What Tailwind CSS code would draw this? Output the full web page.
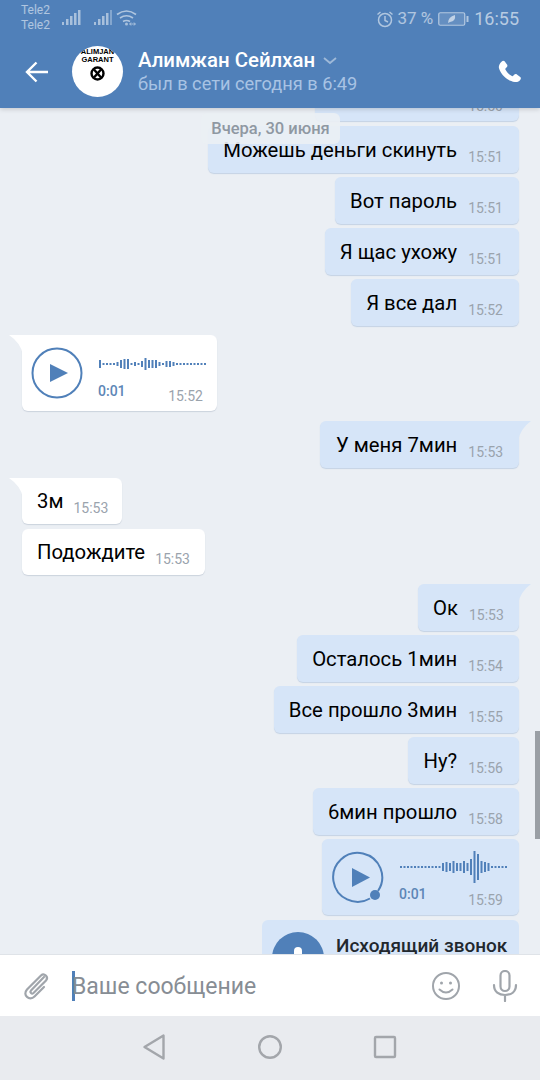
<!doctype html>
<html><head><meta charset="utf-8"><script src="https://cdn.jsdelivr.net/npm/@tailwindcss/browser@4"></script></head>
<body class="m-0 bg-[#ebeff4]">
<div class="w-[540px] h-[1080px] flex flex-col overflow-hidden relative font-['Roboto',sans-serif]">
  <header class="h-[108px] shrink-0 bg-[#5080b9] relative z-10 shadow-[0_1px_5px_rgba(0,0,0,0.18)]">
    <div class="h-[36px] flex items-start pl-[21px] pr-[21px] text-white/50">
      <div class="w-[35px] pt-[3px] text-[12px] leading-[15px] text-white/55 font-['Roboto']"><div>Tele2</div><div>Tele2</div></div>
      <svg class="mt-[9px] ml-[5px]" width="82" height="20" viewBox="0 0 82 20" fill="#fff" fill-opacity=".5">
        <rect x="1" y="13" width="2" height="3"/><rect x="5" y="10" width="2.5" height="6"/><rect x="9" y="7" width="2.5" height="9"/><rect x="13" y="4" width="2.5" height="12"/><rect x="17" y="1" width="2.5" height="15"/>
        <rect x="33" y="13" width="2" height="3"/><rect x="37" y="10" width="2.5" height="6"/><rect x="41" y="7" width="2.5" height="9"/><rect x="45" y="4" width="2.5" height="12"/><rect x="49" y="1" width="2" height="15" fill-opacity=".3"/>
        <g fill="none" stroke="#fff" stroke-opacity=".55" stroke-width="1.7"><path d="M56 5.5q9.500-7 19 0"/><path d="M59 9q6.500-4.500 13 0"/><path d="M62 12.500q3.500-2 7 0"/></g>
        <circle cx="65.500" cy="15" r="1.500"/><path d="M69 15h5M70 13.500l-1.500 1.500 1.500 1.500M73 13.500l1.500 1.500-1.500 1.500" stroke="#fff" stroke-opacity=".5" fill="none"/>
      </svg>
      <div class="ml-auto flex items-center h-[36px] pt-[1px]">
        <svg width="18" height="18" viewBox="0 0 18 18" fill="none" stroke="#fff" stroke-opacity=".55" stroke-width="1.500"><circle cx="9" cy="10" r="6.500"/><path d="M9 6v4.500l3 1.500M1.500 4.500 4.500 2M16.500 4.500 13.500 2"/></svg>
        <span class="ml-[3px] text-[17px] text-white/55">37 %</span>
        <svg class="ml-[5px]" width="31" height="16" viewBox="0 0 31 16"><rect x=".75" y="1.750" width="26" height="12.500" rx="1.500" fill="#fff" fill-opacity=".12" stroke="#fff" stroke-opacity=".55" stroke-width="1.200"/><path d="M10 12q0-6 7-8 1 6-5 7z" fill="#fff" fill-opacity=".6"/><rect x="28.500" y="5" width="2" height="6" fill="#fff" fill-opacity=".55"/></svg>
        <span class="ml-[5px] text-[18px] text-white/60">16:55</span>
      </div>
    </div>
    <div class="h-[71px] flex items-center">
      <svg class="ml-[25px]" width="24" height="22" viewBox="0 0 24 22" fill="none" stroke="#fff" stroke-width="2.400"><path d="M23 11H2M11.500 1.500 2 11l9.500 9.500"/></svg>
      <div class="ml-[23px] w-[51px] h-[51px] rounded-full bg-white flex flex-col items-center overflow-hidden text-black font-black text-[7.500px] leading-[8px] font-['Liberation_Sans']">
        <div class="mt-[2px] whitespace-nowrap">ALIMJAN</div><div class="whitespace-nowrap">GARANT</div>
        <svg class="mt-[2px]" width="15" height="15" viewBox="0 0 15 15" fill="none" stroke="#000" stroke-width="2.400"><circle cx="7.500" cy="7.500" r="6"/><path d="m4 3.500 7 8M11 3.500l-7 8"/></svg>
      </div>
      <div class="ml-[15px] w-[250px]">
        <div class="flex items-center text-white text-[20.400px] leading-[25px] font-medium whitespace-nowrap">Алимжан Сейлхан<svg class="ml-[8px]" width="14" height="8" viewBox="0 0 14 8" fill="none" stroke="#fff" stroke-opacity=".45" stroke-width="1.800"><path d="m1 1 6 5 6-5"/></svg></div>
        <div class="text-[#a8c3e4] text-[18.200px] leading-[22px] whitespace-nowrap">был в сети сегодня в 6:49</div>
      </div>
      <svg class="ml-auto mr-[18px]" width="24" height="24" viewBox="0 0 24 24" fill="#fff"><path d="M6.600 1.300 9 4.600c.6.800.5 1.800-.1 2.500L7.500 8.500c-.3.300-.3.700-.1 1.100 1.500 2.800 3.700 5 6.500 6.500.4.200.8.200 1.100-.1l1.400-1.400c.7-.7 1.700-.7 2.500-.1l3.300 2.400c.8.600.9 1.700.3 2.500-1.400 2-3.500 3.100-5.700 2.600C9 20.800 2.700 14 1 8.200.4 6 1.500 3.600 3.800 1.400c.8-.8 2.100-.8 2.800-.1z"/></svg>
    </div>
  </header>

  <main class="flex-1 min-h-0 overflow-hidden relative flex flex-col items-end pr-[21px] text-black text-[20.300px]">
    <div class="shrink-0 -mt-[32px] mb-[5px] relative w-[204px] h-[45px] rounded-[6px] bg-[#d6e5f8] shadow-[0_1px_1px_rgba(80,128,185,0.25)] flex items-end justify-end pr-[16px] pb-[7px] text-[14px] leading-[16px] text-[#9aa3ad]">15:50
      <svg class="absolute left-[26px] -top-[12px]" width="20" height="20" viewBox="0 0 20 20" fill="none" stroke="#5080b9" stroke-width="2"><circle cx="10" cy="10" r="9"/></svg>
    </div>
    <div class="shrink-0 mb-[4px] h-[47px] rounded-[6px] bg-[#d6e5f8] shadow-[0_1px_1px_rgba(80,128,185,0.25)] pl-[15px] pr-[16px] flex whitespace-nowrap"><span class="mt-[9px] leading-[30px]">Можешь деньги скинуть</span><span class="ml-[11px] mt-[21px] text-[14px] leading-[20px] text-[#9aa3ad]">15:51</span></div>
    <div class="shrink-0 mb-[4px] h-[47px] rounded-[6px] bg-[#d6e5f8] shadow-[0_1px_1px_rgba(80,128,185,0.25)] pl-[15px] pr-[16px] flex whitespace-nowrap"><span class="mt-[9px] leading-[30px]">Вот пароль</span><span class="ml-[11px] mt-[21px] text-[14px] leading-[20px] text-[#9aa3ad]">15:51</span></div>
    <div class="shrink-0 mb-[4px] h-[47px] rounded-[6px] bg-[#d6e5f8] shadow-[0_1px_1px_rgba(80,128,185,0.25)] pl-[15px] pr-[16px] flex whitespace-nowrap"><span class="mt-[9px] leading-[30px]">Я щас ухожу</span><span class="ml-[11px] mt-[21px] text-[14px] leading-[20px] text-[#9aa3ad]">15:51</span></div>
    <div class="shrink-0 mb-[9px] h-[47px] rounded-[6px] bg-[#d6e5f8] shadow-[0_1px_1px_rgba(80,128,185,0.25)] pl-[15px] pr-[16px] flex whitespace-nowrap"><span class="mt-[9px] leading-[30px]">Я все дал</span><span class="ml-[11px] mt-[21px] text-[14px] leading-[20px] text-[#9aa3ad]">15:52</span></div>

    <div class="self-start shrink-0 ml-[22px] mb-[10px] relative w-[195px] h-[76px] rounded-[6px] rounded-tl-none bg-white shadow-[0_1px_1px_rgba(80,100,130,0.2)]">
      <svg class="absolute -left-[13px] top-0" width="14" height="20" viewBox="0 0 14 20" fill="#fff"><path d="M0 0h14v20Q12 8 0 0z"/></svg>
      <svg class="absolute left-[9px] top-[12px]" width="52" height="52" viewBox="0 0 52 52"><circle cx="26" cy="26" r="24.500" fill="none" stroke="#5080b9" stroke-width="2"/><path d="M19 17v18l18-9z" fill="#5080b9"/></svg>
      <svg class="absolute left-[77px] top-[18px]" width="110" height="22" viewBox="0 0 110 22" stroke="#5080b9" stroke-width="2" fill="none"><path d="M1 7v8M4.500 10v2M8 10v2M11.500 10v2M15 10v2M18.500 9v4M22 7v8M25.500 6v10M29 6v10M32.500 10v2M36 9v4M39.500 10v2M43 8v6M46.500 5v12M50 7v8M53.500 7v8M57 7v8M60.500 9v4M64 10v2M67.500 8v6M71 8v6M74.500 9v4M78 10v2M81.500 10v2M85 10v2M88.500 10v2M92 10v2M95.500 10v2M99 10v2M102.500 10v2M106 10v2"/></svg>
      <span class="absolute left-[76px] top-[46px] text-[14px] leading-[20px] font-medium text-[#5d86b6]">0:01</span>
      <span class="absolute right-[14px] top-[51px] text-[14px] leading-[20px] text-[#9aa3ad]">15:52</span>
    </div>

    <div class="shrink-0 mb-[10px] relative h-[47px] w-[199px] rounded-[6px] rounded-tr-none bg-[#d6e5f8] shadow-[0_1px_1px_rgba(80,128,185,0.25)] pl-[16px] flex whitespace-nowrap">
      <span class="mt-[9px] leading-[30px]">У меня 7мин</span><span class="ml-[11px] mt-[21px] text-[14px] leading-[20px] text-[#9aa3ad]">15:53</span>
      <svg class="absolute -right-[12px] top-0" width="13" height="20" viewBox="0 0 13 20" fill="#d6e5f8"><path d="M0 0h13Q2 8 0 20z"/></svg>
    </div>

    <div class="self-start shrink-0 ml-[22px] mb-[5px] relative h-[46px] rounded-[6px] rounded-tl-none bg-white shadow-[0_1px_1px_rgba(80,100,130,0.2)] pl-[15px] pr-[14px] flex whitespace-nowrap">
      <svg class="absolute -left-[13px] top-0" width="14" height="20" viewBox="0 0 14 20" fill="#fff"><path d="M0 0h14v20Q12 8 0 0z"/></svg>
      <span class="mt-[8px] leading-[30px]">3м</span><span class="ml-[10px] mt-[20px] text-[14px] leading-[20px] text-[#9aa3ad]">15:53</span>
    </div>
    <div class="self-start shrink-0 ml-[22px] mb-[9px] h-[46px] rounded-[6px] bg-white shadow-[0_1px_1px_rgba(80,100,130,0.2)] pl-[15px] pr-[15px] flex whitespace-nowrap"><span class="mt-[8px] leading-[30px]">Подождите</span><span class="ml-[10px] mt-[20px] text-[14px] leading-[20px] text-[#9aa3ad]">15:53</span></div>

    <div class="shrink-0 mb-[4px] relative h-[47px] w-[101px] rounded-[6px] rounded-tr-none bg-[#d6e5f8] shadow-[0_1px_1px_rgba(80,128,185,0.25)] pl-[15px] flex whitespace-nowrap">
      <span class="mt-[9px] leading-[30px]">Ок</span><span class="ml-[11px] mt-[21px] text-[14px] leading-[20px] text-[#9aa3ad]">15:53</span>
      <svg class="absolute -right-[12px] top-0" width="13" height="20" viewBox="0 0 13 20" fill="#d6e5f8"><path d="M0 0h13Q2 8 0 20z"/></svg>
    </div>
    <div class="shrink-0 mb-[4px] h-[47px] rounded-[6px] bg-[#d6e5f8] shadow-[0_1px_1px_rgba(80,128,185,0.25)] pl-[15px] pr-[16px] flex whitespace-nowrap"><span class="mt-[9px] leading-[30px]">Осталось 1мин</span><span class="ml-[11px] mt-[21px] text-[14px] leading-[20px] text-[#9aa3ad]">15:54</span></div>
    <div class="shrink-0 mb-[4px] h-[47px] rounded-[6px] bg-[#d6e5f8] shadow-[0_1px_1px_rgba(80,128,185,0.25)] pl-[15px] pr-[16px] flex whitespace-nowrap"><span class="mt-[9px] leading-[30px]">Все прошло 3мин</span><span class="ml-[11px] mt-[21px] text-[14px] leading-[20px] text-[#9aa3ad]">15:55</span></div>
    <div class="shrink-0 mb-[4px] h-[47px] rounded-[6px] bg-[#d6e5f8] shadow-[0_1px_1px_rgba(80,128,185,0.25)] pl-[15px] pr-[16px] flex whitespace-nowrap"><span class="mt-[9px] leading-[30px]">Ну?</span><span class="ml-[11px] mt-[21px] text-[14px] leading-[20px] text-[#9aa3ad]">15:56</span></div>
    <div class="shrink-0 mb-[4px] h-[47px] rounded-[6px] bg-[#d6e5f8] shadow-[0_1px_1px_rgba(80,128,185,0.25)] pl-[15px] pr-[16px] flex whitespace-nowrap"><span class="mt-[9px] leading-[30px]">6мин прошло</span><span class="ml-[11px] mt-[21px] text-[14px] leading-[20px] text-[#9aa3ad]">15:58</span></div>

    <div class="shrink-0 mb-[5px] relative w-[197px] h-[76px] rounded-[6px] bg-[#d6e5f8] shadow-[0_1px_1px_rgba(80,128,185,0.25)]">
      <svg class="absolute left-[10px] top-[12px]" width="54" height="54" viewBox="0 0 54 54"><path d="M46 40A24.500 24.500 0 1 0 38 47.500" fill="none" stroke="#5080b9" stroke-width="2"/><path d="M20 17v19l18-9.500z" fill="#5080b9"/><circle cx="43" cy="44" r="5" fill="#5080b9"/></svg>
      <svg class="absolute left-[78px] top-[10px]" width="110" height="36" viewBox="0 0 110 36" stroke="#5080b9" stroke-width="2" fill="none"><path d="M1 17v2M4.500 17v2M8 17v2M11.500 17v2M15 17v2M18.500 17v2M22 17v2M25.500 17v2M29 17v2M32.500 17v2M36 17v2M39.500 17v2M43 14v8M46.500 13v10M50 14v8M53.500 12v12M57 14v8M60.500 14v8M64 12v12M67.500 14v8M71 10v16M74.500 2v32M78 5v26M81.500 12v12M85 13v10M88.500 14v8M92 17v2M95.500 17v2M99 17v2M102.500 17v2M106 17v2"/></svg>
      <span class="absolute left-[77px] top-[45px] text-[14px] leading-[20px] font-medium text-[#5d86b6]">0:01</span>
      <span class="absolute right-[16px] top-[51px] text-[14px] leading-[20px] text-[#9aa3ad]">15:59</span>
    </div>

    <div class="shrink-0 relative w-[257px] h-[80px] rounded-[6px] bg-[#d6e5f8]">
      <div class="absolute left-[10px] top-[12px] w-[52px] h-[52px] rounded-full bg-[#5080b9]"><div class="absolute left-[22px] top-[15px] w-[8px] h-[12px] rounded-full bg-white"></div></div>
      <span class="absolute left-[74px] top-[14px] text-[19px] leading-[24px] font-medium text-[#22282e] whitespace-nowrap">Исходящий звонок</span>
    </div>

    <div class="absolute left-[201px] top-[5px] w-[139px] h-[31px] rounded-[6px] bg-[#ebeff4]/90 text-[16.500px] leading-[31px] font-medium text-center text-[#8f98a2] whitespace-nowrap">Вчера, 30 июня</div>
    <div class="absolute right-0 top-[623px] w-[5px] h-[108px] bg-[#9a9fa5]"></div>
  </main>

  <div class="h-[62px] shrink-0 bg-white border-t border-[#dfe3e8] flex items-center relative z-10">
    <svg class="ml-[22px]" width="28" height="30" viewBox="0 0 28 30" fill="none" stroke="#a0a5ab" stroke-width="2.200" stroke-linecap="round"><path d="M22 6 9 19.500c-1.500 1.700 .7 4 2.500 2.500L24 9.500c3-3.500-1.800-8-5-5L5 18.500c-5 5.500 2.500 12 7.500 7L22 16"/></svg>
    <div class="ml-[22px] w-[3px] h-[30px] bg-[#5080b9]"></div>
    <span class="text-[#878d94] text-[23px] -ml-[3px] mt-[4px]">Ваше сообщение</span>
    <svg class="ml-auto" width="30" height="30" viewBox="0 0 30 30" fill="none" stroke="#a0a5ab" stroke-width="2"><circle cx="15" cy="15" r="13"/><circle cx="10.500" cy="12" r="1.500" fill="#a0a5ab" stroke="none"/><circle cx="19.500" cy="12" r="1.500" fill="#a0a5ab" stroke="none"/><path d="M8.500 18.500q6.500 6 13 0" stroke-linecap="round"/></svg>
    <svg class="ml-[31px] mr-[22px]" width="26" height="32" viewBox="0 0 26 32" fill="none" stroke="#a0a5ab" stroke-width="2.200" stroke-linecap="round"><rect x="8.500" y="1" width="9" height="20" rx="4.500"/><path d="M2 15c0 7 5 10 11 10s11-3 11-10M13 25v6"/></svg>
  </div>
  <nav class="h-[64px] shrink-0 bg-[#e9ebef] flex items-center pl-[143px] pb-[3px]">
    <svg width="22" height="26" viewBox="0 0 22 26" fill="none" stroke="#a3a6ab" stroke-width="2.400" stroke-linejoin="round"><path d="M20.500 1.500v23L1.500 13z"/></svg>
    <svg class="ml-[93px]" width="24" height="24" viewBox="0 0 24 24" fill="none" stroke="#a3a6ab" stroke-width="2.400"><circle cx="12" cy="12" r="10.800"/></svg>
    <svg class="ml-[91px]" width="24" height="24" viewBox="0 0 24 24" fill="none" stroke="#a3a6ab" stroke-width="2.400" stroke-linejoin="round"><rect x="2" y="2" width="20" height="20" rx="1"/></svg>
  </nav>
</div>
</body></html>
